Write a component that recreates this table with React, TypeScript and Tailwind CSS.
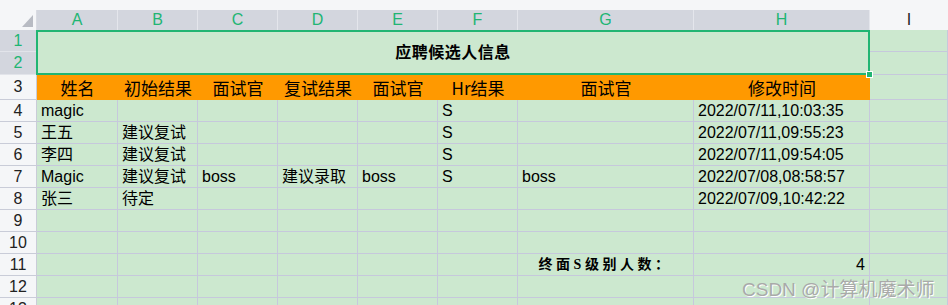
import React from 'react';

const cols = ['A', 'B', 'C', 'D', 'E', 'F', 'G', 'H'];
const widths = ['w-[81px]', 'w-[80px]', 'w-[80px]', 'w-[80px]', 'w-[80px]', 'w-[80px]', 'w-[176px]', 'w-[176px]'];

const heads = ['姓名', '初始结果', '面试官', '复试结果', '面试官', 'Hr结果', '面试官', '修改时间'];

const rows: string[][] = [
  ['magic', '', '', '', '', 'S', '', '2022/07/11,10:03:35'],
  ['王五', '建议复试', '', '', '', 'S', '', '2022/07/11,09:55:23'],
  ['李四', '建议复试', '', '', '', 'S', '', '2022/07/11,09:54:05'],
  ['Magic', '建议复试', 'boss', '建议录取', 'boss', 'S', 'boss', '2022/07/08,08:58:57'],
  ['张三', '待定', '', '', '', '', '', '2022/07/09,10:42:22'],
  ['', '', '', '', '', '', '', ''],
  ['', '', '', '', '', '', '', ''],
];

const RowHead: React.FC<{ n: number; h?: string; active?: boolean }> = ({ n, h = 'h-[22px]', active }) => (
  <div
    className={`w-[37px] ${h} shrink-0 flex items-center justify-center border-r border-b text-[16px] ${
      active ? 'bg-[#d3d6de] border-[#e2e4ea] text-[#21b573]' : 'bg-[#f5f6f8] border-[#c9ccd8] text-[#222]'
    }`}
  >
    {n}
  </div>
);

const Cell: React.FC<{ w: string; children?: React.ReactNode; className?: string }> = ({ w, children, className = '' }) => (
  <div className={`${w} h-[22px] shrink-0 flex items-center px-[4px] border-r border-b border-[#c6c8dc] bg-[#cce8cf] text-[16px] text-black whitespace-nowrap overflow-visible ${className}`}>
    {children}
  </div>
);

export default function App() {
  return (
    <div className="w-[948px] h-[305px] overflow-hidden bg-[#f5f6f8] font-['Liberation_Sans','Noto_Sans_CJK_SC',sans-serif] relative">
      <div className="h-[10px] bg-[#f5f6f8]" />
      {/* column header */}
      <div className="flex h-[20px]">
        <div className="w-[37px] shrink-0 relative bg-[#f5f6f8] border-r border-[#d9dbe2]">
          <svg className="absolute left-[22px] top-[5px]" width="11" height="12" viewBox="0 0 11 12">
            <polygon points="11,0 11,12 0,12" fill="#b8bbc3" />
          </svg>
        </div>
        {cols.map((c, i) => (
          <div key={c} className={`${widths[i]} shrink-0 flex items-center justify-center bg-[#d3d6de] border-r border-[#e4e6ec] text-[16px] text-[#21b573]`}>
            {c}
          </div>
        ))}
        <div className="w-[78px] shrink-0 flex items-center justify-center bg-[#f5f6f8] text-[16px] text-[#222]">I</div>
      </div>

      {/* rows 1-2 with merged title */}
      <div className="flex h-[45px]">
        <div className="flex flex-col">
          <RowHead n={1} active />
          <RowHead n={2} h="h-[23px]" active />
        </div>
        <div className="w-[834px] h-[45px] shrink-0 relative -ml-px border-2 border-[#21b573] bg-[#cce8cf] flex items-center justify-center">
          <span className="text-[16px] font-bold text-black tracking-[0.5px]">应聘候选人信息</span>
          <div className="absolute right-[-5px] bottom-[-5px] w-[7px] h-[7px] bg-[#21b573] border border-white" />
        </div>
        <div className="flex flex-col">
          <Cell w="w-[78px]" />
          <Cell w="w-[78px]" className="h-[23px]" />
        </div>
      </div>

      {/* row 3 header */}
      <div className="flex h-[25px]">
        <RowHead n={3} h="h-[25px]" />
        {heads.map((t, i) => (
          <div key={i} className={`${widths[i]} shrink-0 flex items-center justify-center bg-[#ff9900] text-[17px] text-black font-['Noto_Sans_CJK_SC','Liberation_Sans',sans-serif]`}>
            {t}
          </div>
        ))}
        <Cell w="w-[78px]" className="h-[25px]" />
      </div>

      {rows.map((r, ri) => (
        <div key={ri} className="flex">
          <RowHead n={ri + 4} />
          {r.map((v, ci) => (
            <Cell key={ci} w={widths[ci]}>
              {v}
            </Cell>
          ))}
          <Cell w="w-[78px]" />
        </div>
      ))}

      {/* row 11 */}
      <div className="flex">
        <RowHead n={11} />
        {widths.slice(0, 6).map((w, i) => (
          <Cell key={i} w={w} />
        ))}
        <Cell w="w-[176px]" className="justify-center">
          <span className="text-[14px] font-bold tracking-[3.5px] font-['Liberation_Serif','Noto_Sans_CJK_SC',serif]">终面S级别人数：</span>
        </Cell>
        <Cell w="w-[176px]" className="justify-end">
          4
        </Cell>
        <Cell w="w-[78px]" />
      </div>

      {[12, 13].map((n) => (
        <div key={n} className="flex">
          <RowHead n={n} />
          {widths.map((w, i) => (
            <Cell key={i} w={w} />
          ))}
          <Cell w="w-[78px]" />
        </div>
      ))}

      <div className="absolute left-[742px] top-[276px] text-[19px] text-[#a9aaa9] [text-shadow:1px_1px_0_#ffffff] whitespace-nowrap pointer-events-none">
        CSDN @计算机魔术师
      </div>
    </div>
  );
}
